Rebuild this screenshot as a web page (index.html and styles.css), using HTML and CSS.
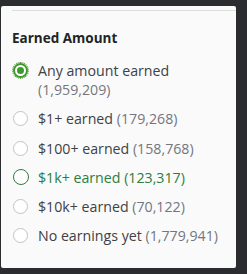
FILE: index.html
```html
<!DOCTYPE html>
<html>
<head>
  <meta charset="utf-8">
  <title>Earned Amount</title>
  <link rel="stylesheet" href="styles.css">
</head>
<body>
  <div class="panel">
    <div class="divider"></div>
    <h3>Earned Amount</h3>

    <ul class="options">
      <li class="option selected">
        <span class="radio"><span class="dot"></span></span>
        <span class="label">Any amount earned <span class="count">(1,959,209)</span></span>
      </li>
      <li class="option">
        <span class="radio"></span>
        <span class="label">$1+ earned <span class="count">(179,268)</span></span>
      </li>
      <li class="option">
        <span class="radio"></span>
        <span class="label">$100+ earned <span class="count">(158,768)</span></span>
      </li>
      <li class="option hover">
        <span class="radio"></span>
        <span class="label">$1k+ earned <span class="count">(123,317)</span></span>
      </li>
      <li class="option">
        <span class="radio"></span>
        <span class="label">$10k+ earned <span class="count">(70,122)</span></span>
      </li>
      <li class="option">
        <span class="radio"></span>
        <span class="label">No earnings yet <span class="count">(1,779,941)</span></span>
      </li>
    </ul>
  </div>
</body>
</html>
```

FILE: styles.css
```css
body {
  background: #2b2c30;
  margin: 0;
  padding: 0;
  font-family: "Open Sans", "Liberation Sans", sans-serif;
}

.panel {
  background: #fafafa;
  margin: 6px 0 0 1px;
  width: 235px;
  height: 262px;
  border-radius: 2px;
  padding-top: 4px;
  box-sizing: border-box;
}

.divider {
  height: 1px;
  background: #dedede;
  margin-left: 11px;
}

h3 {
  margin: 19px 0 0 11px;
  font-size: 13.5px;
  font-weight: 700;
  color: #222325;
  line-height: 16px;
}

.options {
  list-style: none;
  margin: 15px 0 0 0;
  padding: 0;
}

.option {
  display: flex;
  align-items: flex-start;
  padding-left: 12px;
  margin-bottom: 10.3px;
}

.radio {
  flex: none;
  width: 15px;
  height: 15px;
  border: 1px solid #c2c3c6;
  border-radius: 50%;
  box-sizing: border-box;
  margin: 2px 10px 0 0;
  display: flex;
  align-items: center;
  justify-content: center;
  background: #fff;
}

.label {
  font-size: 14.2px;
  line-height: 19px;
  color: #404145;
}

.count {
  color: #74767e;
}

.selected .radio {
  border: 2px solid #3c9a2b;
  outline: 1px dotted #4a8f30;
  outline-offset: 0;
}

.selected .dot {
  width: 7px;
  height: 7px;
  border-radius: 50%;
  background: #3c9a2b;
}

.selected .label {
  width: 150px;
}

.hover .radio {
  border: 1.5px solid #2e7d3e;
  width: 16px;
  height: 16px;
  margin: 1.5px 9.5px 0 -0.5px;
}

.hover .label,
.hover .count {
  color: #2e7d3e;
}
```
